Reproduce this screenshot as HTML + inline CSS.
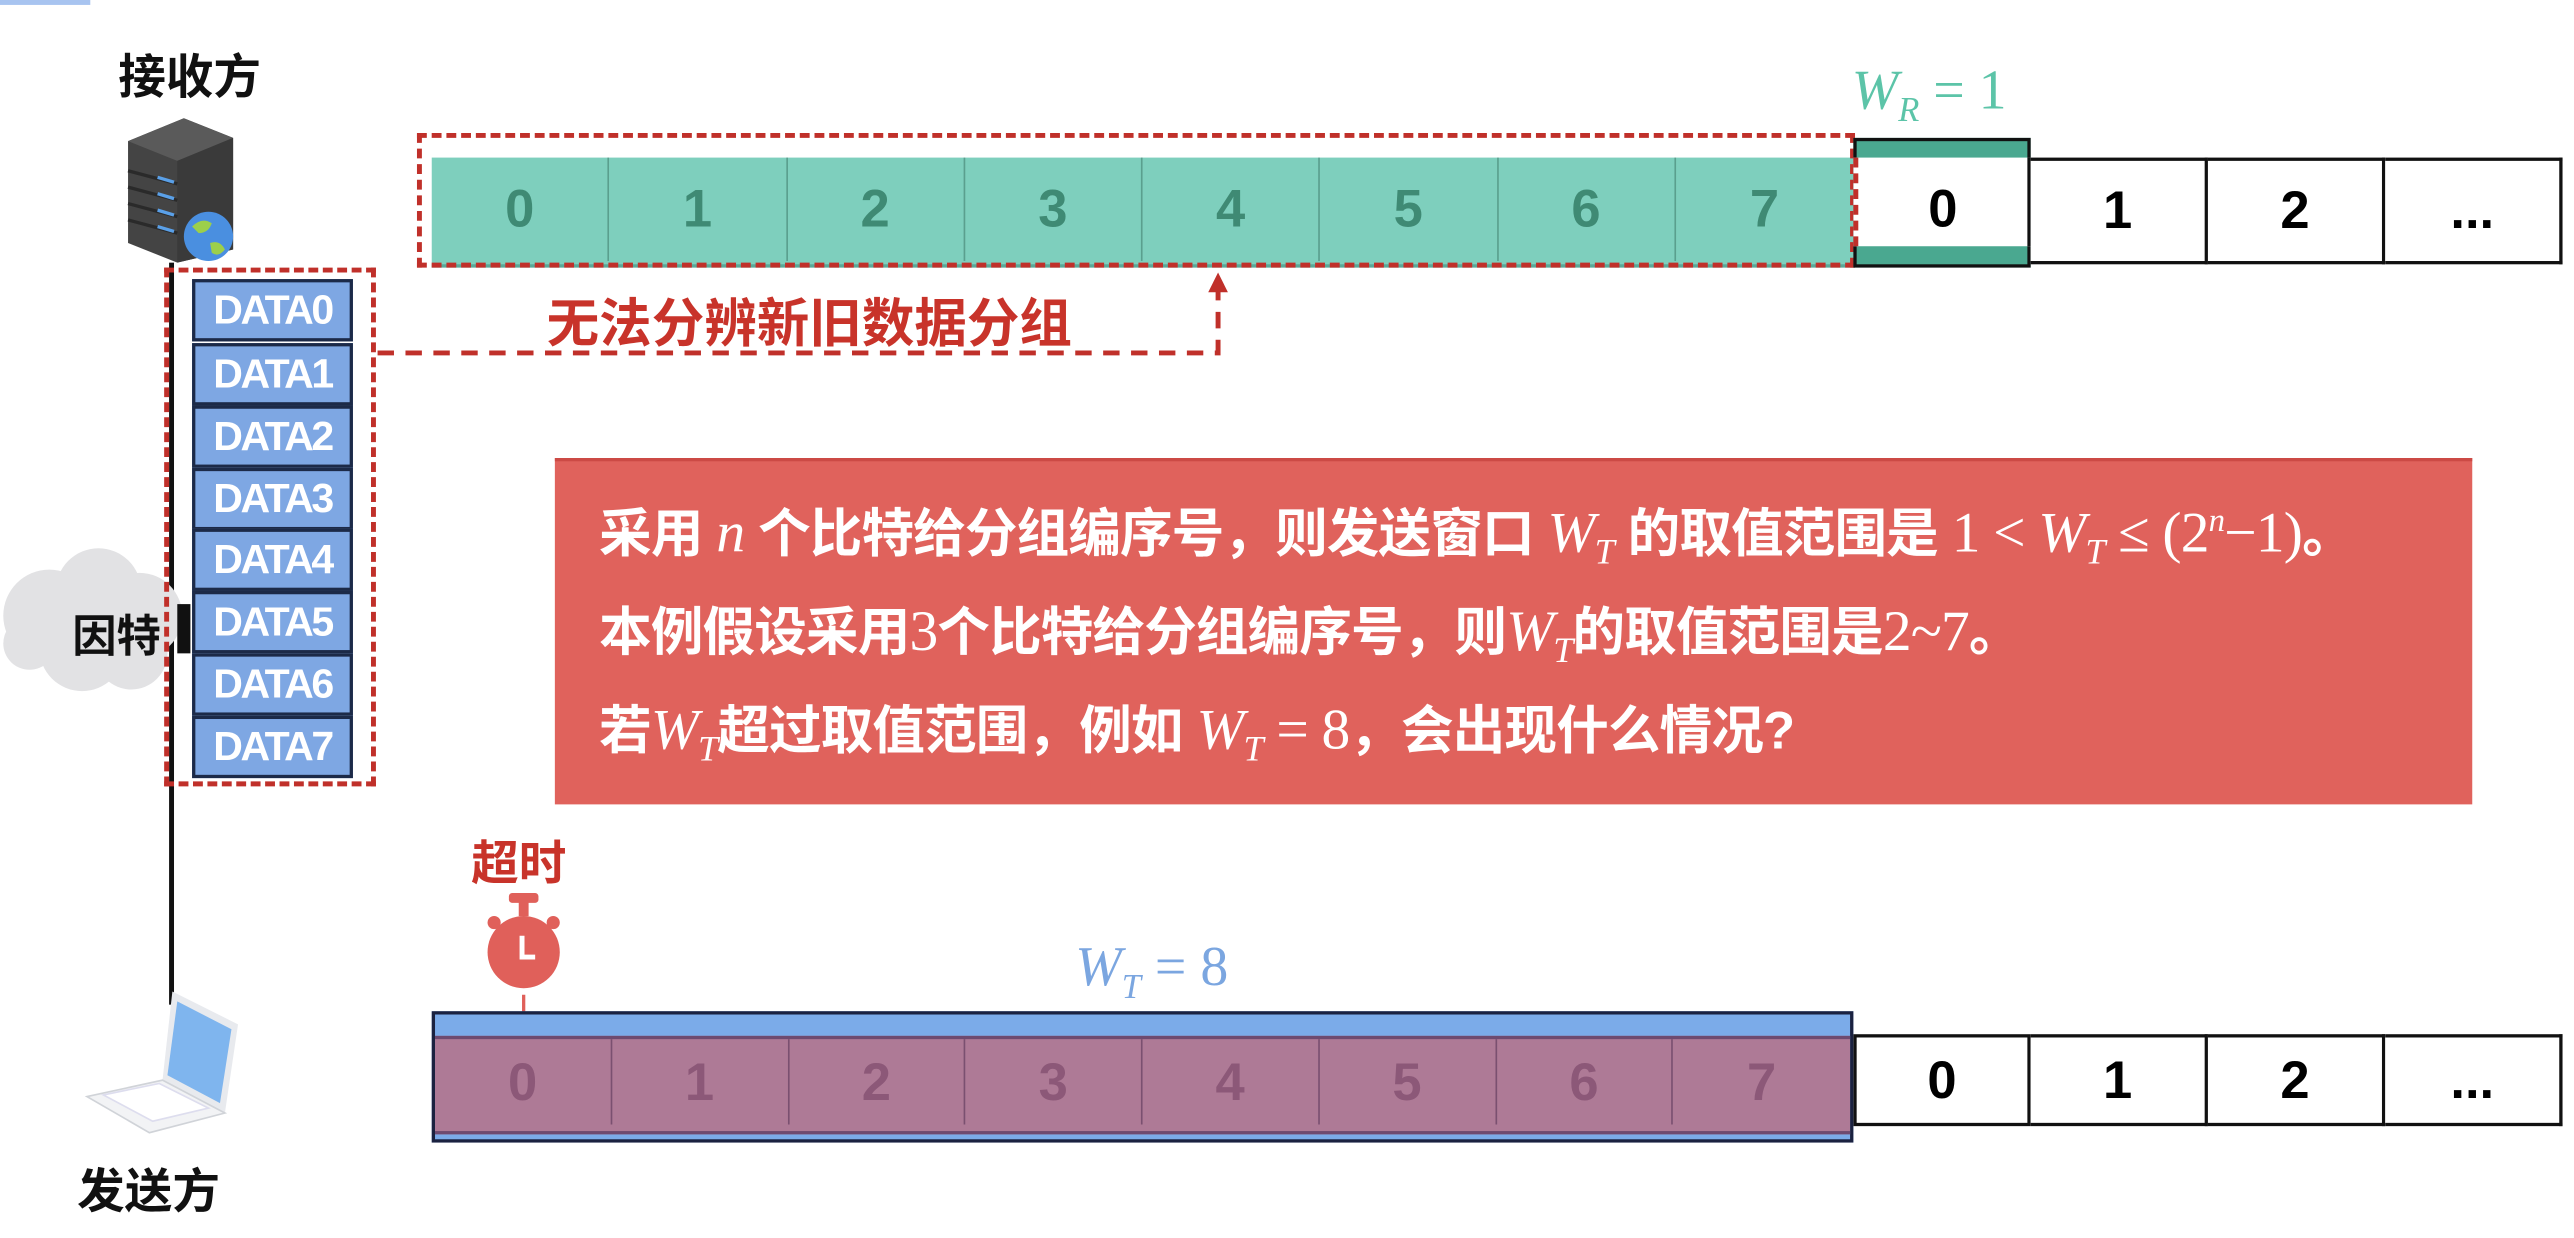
<!DOCTYPE html>
<html><head><meta charset="utf-8">
<style>
html,body{margin:0;padding:0;background:#fff;overflow:hidden}
body{width:2574px;height:1238px;position:relative}
#s{position:absolute;left:0;top:0;width:1568px;height:754px;transform:scale(1.6416);transform-origin:0 0;font-family:"Liberation Sans","Noto Sans CJK SC",sans-serif}
.a{position:absolute}
.cell{position:absolute;box-sizing:border-box;text-align:center;font-weight:bold;font-size:32px}
.cj{font-family:"Liberation Sans","Noto Sans CJK SC",sans-serif;font-weight:bold}
.m{font-family:"Liberation Serif",serif;font-style:italic;font-weight:normal}
.r{font-family:"Liberation Serif",serif;font-weight:normal}
.data{position:absolute;left:117px;width:98px;height:37.7px;box-sizing:border-box;background:#7ea7e3;border:2px solid #1c2a48;color:#fff;font-weight:bold;font-size:25px;line-height:34px;text-align:center;letter-spacing:-1.5px}
.bt{font-size:32px;color:#fff;white-space:nowrap;letter-spacing:-0.5px}
.bt .m,.bt .r{font-size:35px}
.bt sub{font-size:22px!important}
</style></head><body><div id="s">
<div class="a" style="left:0;top:0;width:55px;height:3px;background:#a8c4f0"></div>
<div class="a cj" style="left:72px;top:24px;font-size:29px;color:#111">接收方</div>
<div class="a" style="left:103px;top:160px;width:3px;height:452px;background:#111"></div>
<svg class="a" style="left:70px;top:64px" width="85" height="100" viewBox="0 0 85 100">
<polygon points="8,22 42,8 72,20 72,88 38,96 8,84" fill="#444"/>
<polygon points="8,22 42,8 72,20 38,34" fill="#5a5a5a"/>
<polygon points="38,34 72,20 72,88 38,96" fill="#3a3a3a"/>
<g stroke="#2a2a2a" stroke-width="2"><line x1="8" y1="40" x2="38" y2="48"/><line x1="8" y1="50" x2="38" y2="58"/><line x1="8" y1="60" x2="38" y2="68"/><line x1="8" y1="70" x2="38" y2="78"/></g>
<g stroke="#5aa0e8" stroke-width="2"><line x1="26" y1="44" x2="36" y2="47"/><line x1="26" y1="54" x2="36" y2="57"/><line x1="26" y1="64" x2="36" y2="67"/><line x1="26" y1="74" x2="36" y2="77"/></g>
<circle cx="57" cy="80" r="15" fill="#4a8fe0"/><path d="M47,74 q6,-6 12,-2 q-2,6 -8,6z M58,84 q6,-2 9,4 q-4,5 -8,2z" fill="#9ccf4a"/>
</svg>
<svg class="a" style="left:0;top:330px" width="115" height="95" viewBox="0 0 115 95">
<g fill="#e2e2e4"><circle cx="30" cy="45" r="28"/><circle cx="60" cy="30" r="26"/><circle cx="85" cy="45" r="26"/><circle cx="50" cy="65" r="26"/><circle cx="80" cy="68" r="22"/><circle cx="18" cy="62" r="16"/></g>
</svg>
<div class="a cj" style="left:44px;top:366px;font-size:27px;color:#111">因特</div>
<div class="a" style="left:108px;top:368px;width:8px;height:30px;background:#111"></div>
<div class="a" style="left:100px;top:163px;width:129px;height:316px;box-sizing:border-box;border:3px dashed #c0302a"></div>
<div class="data" style="top:170px">DATA0</div>
<div class="data" style="top:209px">DATA1</div>
<div class="data" style="top:247px">DATA2</div>
<div class="data" style="top:285px">DATA3</div>
<div class="data" style="top:322px">DATA4</div>
<div class="data" style="top:360px">DATA5</div>
<div class="data" style="top:398px">DATA6</div>
<div class="data" style="top:436px">DATA7</div>
<div class="a" style="left:263px;top:96px;width:866px;height:65px;background:#7ecfbd;border-bottom:2px solid #5aa898"></div>
<div class="a" style="left:254px;top:81px;width:876px;height:82px;box-sizing:border-box;border:3px dashed #c0302a"></div>
<svg class="a" style="left:228px;top:160px" width="530" height="62" viewBox="0 0 530 62">
<path d="M2,55 H514 V14" fill="none" stroke="#c0302a" stroke-width="3" stroke-dasharray="10,7"/>
<polygon points="508,18 514,6 520,18" fill="#c0302a"/>
</svg>
<div class="a cj" style="left:333px;top:172px;font-size:32px;color:#c8332a;letter-spacing:0px">无法分辨新旧数据分组</div>
<div class="a" style="left:1128px;top:36px;font-size:34px;color:#5cc4a8;white-space:nowrap"><span class="m">W</span><sub class="m" style="font-size:21px">R</sub><span class="r"> = 1</span></div>
<div class="a" style="left:1129px;top:84px;width:108px;height:79px;box-sizing:border-box;border:2px solid #111;background:#4aa890"></div>
<div class="cell" style="left:1129px;top:96px;width:108px;height:54px;background:#fff;border-right:2px solid #111;border-left:3px dashed #c0302a;line-height:62px">0</div>
<div class="cell" style="left:1237px;top:96px;width:108px;height:65px;background:#fff;border:2px solid #111;border-left:none;line-height:61px">1</div>
<div class="cell" style="left:1345px;top:96px;width:108px;height:65px;background:#fff;border:2px solid #111;border-left:none;line-height:61px">2</div>
<div class="cell" style="left:1453px;top:96px;width:108px;height:65px;background:#fff;border:2px solid #111;border-left:none;line-height:61px">...</div>
<div class="a" style="left:338px;top:279px;width:1168px;height:209px;background:#e0625c;border-top:2px solid #cc4a45"></div>
<div class="a cj bt" style="left:365px;top:300px">采用 <span class="m">n</span> 个比特给分组编序号，则发送窗口 <span class="m">W</span><sub class="m">T</sub> 的取值范围是 <span class="r">1 &lt; </span><span class="m">W</span><sub class="m">T</sub><span class="r"> ≤ (2<sup class="m" style="font-size:20px">n</sup>−1)</span>。</div>
<div class="a cj bt" style="left:365px;top:360px">本例假设采用<span class="r">3</span>个比特给分组编序号，则<span class="m">W</span><sub class="m">T</sub>的取值范围是<span class="r">2~7</span>。</div>
<div class="a cj bt" style="left:365px;top:420px">若<span class="m">W</span><sub class="m">T</sub>超过取值范围，例如 <span class="m">W</span><sub class="m">T</sub><span class="r"> = 8</span>，会出现什么情况?</div>
<div class="a cj" style="left:287px;top:503px;font-size:29px;color:#c8332a">超时</div>
<svg class="a" style="left:290px;top:540px" width="60" height="105" viewBox="0 0 60 105">
<rect x="20" y="4" width="18" height="6" rx="2" fill="#e0605a"/><rect x="26" y="8" width="6" height="10" fill="#e0605a"/>
<circle cx="11" cy="22" r="4" fill="#e0605a"/><circle cx="47" cy="22" r="4" fill="#e0605a"/>
<circle cx="29" cy="40" r="22" fill="#e0605a"/>
<path d="M28,30 V43 H36" fill="none" stroke="#fff" stroke-width="3"/>
<line x1="29" y1="66" x2="29" y2="92" stroke="#e0605a" stroke-width="2"/>
<polygon points="24,88 34,88 29,100" fill="#e0605a"/>
</svg>
<div class="a" style="left:655px;top:570px;font-size:34px;color:#7ba6e0;white-space:nowrap"><span class="m">W</span><sub class="m" style="font-size:21px">T</sub><span class="r"> = 8</span></div>
<div class="a" style="left:263px;top:616px;width:866px;height:80px;box-sizing:border-box;background:#7babe9;border:2px solid #1b2240"></div>
<div class="a" style="left:265px;top:631px;width:862px;height:56px;background:#ae7a96;border-top:2px solid #6e4a70;border-bottom:2px solid #6e4a70"></div>
<div class="cell" style="left:1129px;top:630px;width:108px;height:56px;background:#fff;border:2px solid #111;line-height:52px">0</div>
<div class="cell" style="left:1237px;top:630px;width:108px;height:56px;background:#fff;border:2px solid #111;border-left:none;line-height:52px">1</div>
<div class="cell" style="left:1345px;top:630px;width:108px;height:56px;background:#fff;border:2px solid #111;border-left:none;line-height:52px">2</div>
<div class="cell" style="left:1453px;top:630px;width:108px;height:56px;background:#fff;border:2px solid #111;border-left:none;line-height:52px">...</div>
<svg class="a" style="left:45px;top:598px" width="110" height="95" viewBox="0 0 110 95">
<polygon points="60,6 100,26 92,80 54,60" fill="#e8eaee"/>
<polygon points="63,12 96,29 89,74 57,57" fill="#7fb5ee"/>
<polygon points="8,70 54,60 92,80 46,92" fill="#f2f3f5" stroke="#d0d3d8"/>
<polygon points="18,69 52,62 82,77 48,85" fill="#fff" stroke="#dde"/>
</svg>
<div class="a cj" style="left:47px;top:703px;font-size:29px;color:#111">发送方</div>
</div>
<script>
var s=document.getElementById('s');
for(var i=0;i<8;i++){
 var d=document.createElement('div');d.className='cell';
 d.style.cssText='left:'+(263+i*108.25)+'px;top:96px;width:108.25px;height:63px;border-right:'+(i<7?'1px solid #5a9f8e':'none')+';color:#3f8a74;line-height:63px';
 d.textContent=i;s.appendChild(d);
 var e=document.createElement('div');e.className='cell';
 e.style.cssText='left:'+(265+i*107.75)+'px;top:633px;width:107.75px;height:52px;border-right:'+(i<7?'1px solid #7a5070':'none')+';color:#8c5878;line-height:52px';
 e.textContent=i;s.appendChild(e);
}
</script>
</body></html>
